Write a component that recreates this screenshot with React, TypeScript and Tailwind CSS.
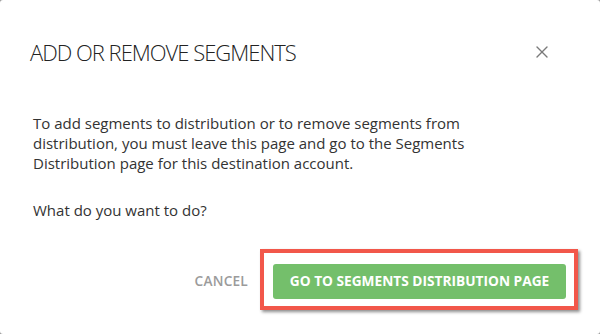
import React from "react";

function CloseIcon(): JSX.Element {
  return (
    <svg width="12" height="12" viewBox="0 0 12 12" fill="none" stroke="#7a7a7a" strokeWidth="1.4" strokeLinecap="round">
      <line x1="1" y1="1" x2="11" y2="11" />
      <line x1="11" y1="1" x2="1" y2="11" />
    </svg>
  );
}

export default function App(): JSX.Element {
  return (
    <div className="h-[334px] w-[600px] bg-[#9a9a9a]">
      <div className="relative flex h-full w-full flex-col rounded-[3px] bg-white font-['Open_Sans',sans-serif] text-[#333]">
        <div className="flex items-center justify-between pl-[30px] pr-[46px] pt-[38px]">
          <h2 className="text-[22px] font-light leading-[28px] tracking-[-1px] text-[#222]">
            ADD OR REMOVE SEGMENTS
          </h2>
          <button className="flex h-6 w-6 items-center justify-center">
            <CloseIcon />
          </button>
        </div>

        <div className="px-[33px] pt-[47px] text-[15px] leading-[20px]">
          <p className="max-w-[505px]">
            To add segments to distribution or to remove segments from distribution, you must leave this page and go to the
            Segments Distribution page for this destination account.
          </p>
          <p className="mt-[27px]">What do you want to do?</p>
        </div>

        <div className="mt-[44px] flex items-center justify-end gap-[25px] pr-[34px]">
          <button className="text-[13.7px] font-semibold tracking-[0.2px] text-[#9b9b9b]">CANCEL</button>
          <div className="relative">
            <button className="h-[35px] w-[293px] rounded-[3px] bg-[#74bf6b] text-[13.7px] font-bold text-white">
              GO TO SEGMENTS DISTRIBUTION PAGE
            </button>
            <div className="pointer-events-none absolute left-[-13px] top-[-15px] h-[61px] w-[318px] border-[4.5px] border-[#f2574a] shadow-[2px_2px_3px_rgba(0,0,0,0.45)]" />
          </div>
        </div>
      </div>
    </div>
  );
}
